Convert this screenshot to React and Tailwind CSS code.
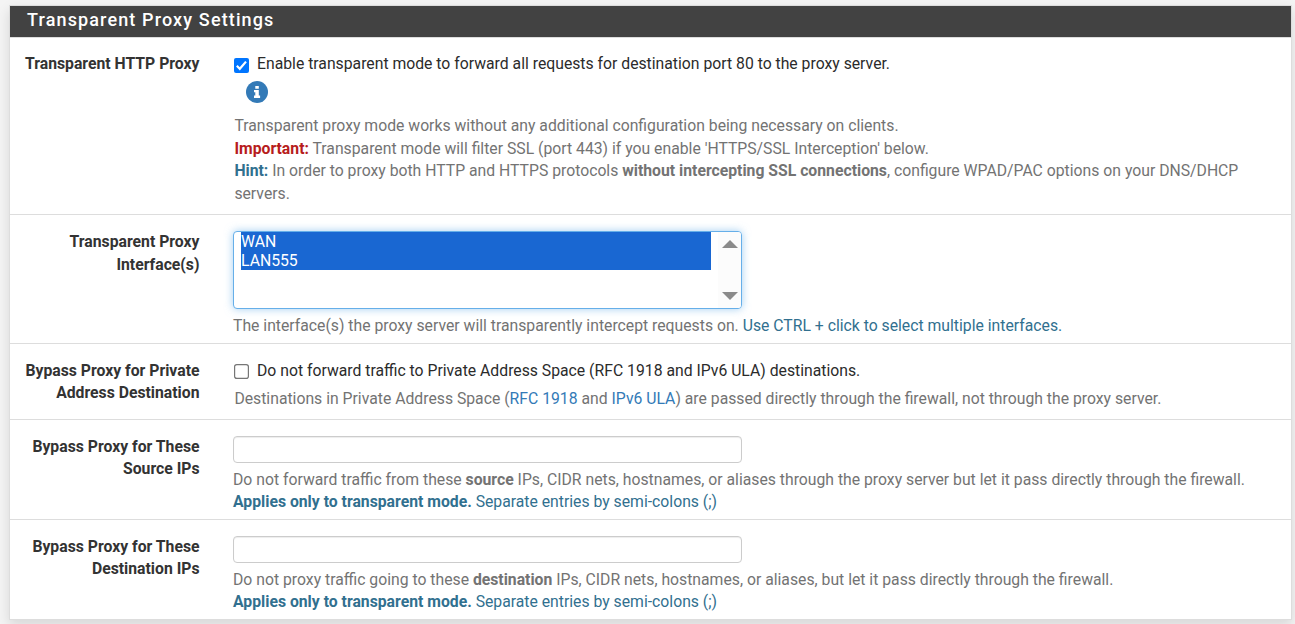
import React from 'react';

function Row({ label, height, labelPad = 'pt-px', children }) {
  return (
    <div className={`flex border-t border-[#dddddd] pt-[15px] ${height}`}>
      <div className={`w-[189.5px] shrink-0 text-right font-bold whitespace-pre-line text-[#333333] ${labelPad}`}>{label}</div>
      <div className="ml-[33.5px] flex min-w-0 flex-1 flex-col items-start">{children}</div>
    </div>
  );
}

function Help({ className = '', children }) {
  return <div className={`whitespace-nowrap text-[#737373] ${className}`}>{children}</div>;
}

function Check({ checked, boxMargin = 'mt-[5px]', className = '', children }) {
  return (
    <label className={`flex h-[22px] items-start text-[#2b2b2b] ${className}`}>
      <svg className={`ml-px shrink-0 ${boxMargin}`} width="15" height="15" viewBox="0 0 15 15">
        {checked ? (
          <>
            <rect width="15" height="15" rx="2" fill="#0075ff" />
            <path d="M2.8 7.8 L5.8 10.8 L12 3.6" fill="none" stroke="#fff" strokeWidth="2.2" />
          </>
        ) : (
          <rect x=".6" y=".6" width="13.8" height="13.8" rx="2.2" fill="#fff" stroke="#767676" strokeWidth="1.2" />
        )}
      </svg>
      <span className="ml-[8px] whitespace-nowrap">{children}</span>
    </label>
  );
}

function TextInput() {
  return (
    <input
      type="text"
      className="mt-px h-[27px] w-[509px] rounded-[4px] border border-[#cccccc] bg-white px-2 shadow-[inset_0_1px_1px_rgba(0,0,0,0.075)] outline-none"
    />
  );
}

function Applies() {
  return (
    <span className="text-[#31708f]">
      <b>Applies only to transparent mode.</b> Separate entries by semi-colons (;)
    </span>
  );
}

export default function App() {
  return (
    <div className="h-[624px] overflow-hidden bg-[#f4f4f4] pt-[5px] pl-[9px] font-['Roboto',sans-serif] text-[15.75px] leading-[22.5px]">
      <section className="h-[615px] w-[1283px] border border-[#dddddd] bg-white shadow-[0_5px_12px_rgba(0,0,0,0.12)]">
        <h2 className="h-[31px] bg-[#424242] pl-[17px] text-[18px] leading-[28px] font-medium tracking-[1.13px] text-white">
          Transparent Proxy Settings
        </h2>
        <Row label="Transparent HTTP Proxy" height="h-[177px]" labelPad="pt-0">
          <Check checked>Enable transparent mode to forward all requests for destination port 80 to the proxy server.</Check>
          <svg className="mt-[6px] ml-[13px]" width="22" height="22" viewBox="0 0 22 22">
            <circle cx="11" cy="11" r="11" fill="#337ab7" />
            <path d="M9.3 5h3.5v2.8H9.3zM8 9h4.8v5.6h1.3v2.3H8v-2.3h1.3v-3.3H8z" fill="#fff" />
          </svg>
          <Help className="mt-[12.4px] ml-[1.4px]">
            Transparent proxy mode works without any additional configuration being necessary on clients.<br />
            <b className="text-[#b71c1c]">Important:</b> Transparent mode will filter SSL (port 443) if you enable 'HTTPS/SSL Interception' below.<br />
            <b className="text-[#31708f]">Hint:</b> In order to proxy both HTTP and HTTPS protocols <b>without intercepting SSL connections</b>, configure WPAD/PAC options on your DNS/DHCP<br />
            servers.
          </Help>
        </Row>
        <Row label={'Transparent Proxy\nInterface(s)'} height="h-[129px]">
          <div className="mt-px flex h-[78px] w-[509px] justify-between rounded-[4px] border border-[#66afe9] bg-white pl-[7px] shadow-[0_0_8px_rgba(102,175,233,0.6)]">
            <ul className="w-[470px] leading-[20px] text-white">
              <li className="h-[19px] bg-[#1967d2]">WAN</li>
              <li className="h-[19px] bg-[#1967d2]">LAN555</li>
            </ul>
            <div className="flex w-[23px] flex-col items-start justify-between rounded-r-[3px] bg-[#fcfcfc] py-[8px] pl-[3.5px]">
              <svg width="16" height="8" viewBox="0 0 16 8"><path d="M0 8L8 0l8 8z" fill="#8b8b8b" /></svg>
              <svg width="16" height="8" viewBox="0 0 16 8"><path d="M0 0h16L8 8z" fill="#8b8b8b" /></svg>
            </div>
          </div>
          <Help className="mt-[6px]">
            The interface(s) the proxy server will transparently intercept requests on. <span className="text-[#31708f]">Use CTRL + click to select multiple interfaces.</span>
          </Help>
        </Row>
        <div className="leading-[22px]">
          <Row label={'Bypass Proxy for Private\nAddress Destination'} height="h-[76px]" labelPad="pt-[1.25px]">
            <Check className="mt-px" boxMargin="mt-[4px]">Do not forward traffic to Private Address Space (RFC 1918 and IPv6 ULA) destinations.</Check>
            <Help className="mt-[6.25px] ml-[1.4px]">
              Destinations in Private Address Space (<a className="text-[#337ab7]">RFC 1918</a> and <a className="text-[#337ab7]">IPv6 ULA</a>) are passed directly through the firewall, not through the proxy server.
            </Help>
          </Row>
          <Row label={'Bypass Proxy for These\nSource IPs'} height="h-[100px]" labelPad="pt-[1.25px]">
            <TextInput />
            <Help className="mt-[6.25px]">
              Do not forward traffic from these <b>source</b> IPs, CIDR nets, hostnames, or aliases through the proxy server but let it pass directly through the firewall.<br />
              <Applies />
            </Help>
          </Row>
          <Row label={'Bypass Proxy for These\nDestination IPs'} height="h-[100px]" labelPad="pt-[1.25px]">
            <TextInput />
            <Help className="mt-[6.25px]">
              Do not proxy traffic going to these <b>destination</b> IPs, CIDR nets, hostnames, or aliases, but let it pass directly through the firewall.<br />
              <Applies />
            </Help>
          </Row>
        </div>
      </section>
    </div>
  );
}
